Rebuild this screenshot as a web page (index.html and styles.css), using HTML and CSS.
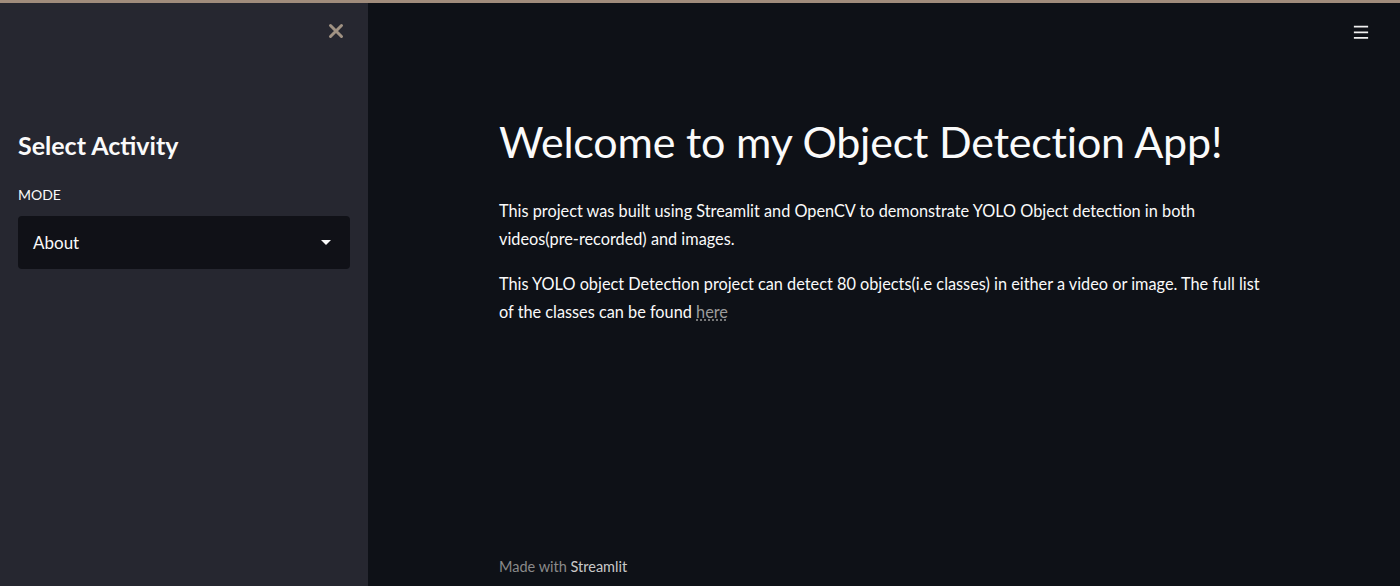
FILE: index.html
```html
<!DOCTYPE html>
<html lang="en">
<head>
<meta charset="utf-8">
<title>Object Detection App</title>
<link rel="stylesheet" href="styles.css">
</head>
<body>
<div class="app">
  <div class="decoration"></div>
  <div class="frame">
    <aside class="sidebar">
      <div class="sidebar-top">
        <button class="close-btn" aria-label="Close sidebar">
          <svg width="16" height="16" viewBox="0 0 16 16"><path d="M2.5 2.5 L13.5 13.5 M13.5 2.5 L2.5 13.5" stroke="#a09283" stroke-width="3" stroke-linecap="round"/></svg>
        </button>
      </div>
      <h2 class="sidebar-title">Select Activity</h2>
      <div class="field-label">MODE</div>
      <div class="select">
        <span class="select-value">About</span>
        <svg class="select-arrow" width="10" height="6" viewBox="0 0 10 6"><path d="M0 0 H10 L5 5 Z" fill="#fafafa"/></svg>
      </div>
    </aside>
    <main class="main">
      <div class="main-header">
        <button class="menu-btn" aria-label="Menu">
          <svg width="18" height="16" viewBox="0 0 18 16"><path d="M1 2 H17 M1 8.5 H17 M1 14.5 H17" stroke="#f0f0f0" stroke-width="2"/></svg>
        </button>
      </div>
      <div class="content">
        <h1 class="title">Welcome to my Object Detection App!</h1>
        <p class="text">This project was built using Streamlit and OpenCV to demonstrate YOLO Object detection in both videos(pre-recorded) and images.</p>
        <p class="text">This YOLO object Detection project can detect 80 objects(i.e classes) in either a video or image. The full list of the classes can be found <a class="link" href="#">here</a></p>
      </div>
      <footer class="footer">Made with <span class="footer-brand">Streamlit</span></footer>
    </main>
  </div>
</div>
</body>
</html>
```

FILE: styles.css
```css
* { box-sizing: border-box; }
html, body {
  margin: 0;
  padding: 0;
  height: 100%;
  background: #0e1117;
  overflow: hidden;
}
.app {
  display: flex;
  flex-direction: column;
  height: 586px;
  font-family: "Lato", "Open Sans", sans-serif;
  color: #fafafa;
}
.decoration {
  height: 3px;
  flex: none;
  background: #a08c7c;
}
.frame {
  flex: 1;
  display: flex;
  min-height: 0;
}
.sidebar {
  width: 368px;
  flex: none;
  background: #262730;
  display: flex;
  flex-direction: column;
  padding: 0 18px;
}
.sidebar-top {
  display: flex;
  justify-content: flex-end;
  padding-top: 20px;
  padding-right: 6px;
  height: 60px;
}
.close-btn, .menu-btn {
  background: none;
  border: 0;
  padding: 0;
  margin: 0;
  display: flex;
  align-items: center;
  justify-content: center;
  width: 16px;
  height: 16px;
}
.sidebar-title {
  margin: 66px 0 0 0;
  font-size: 25px;
  font-weight: 700;
  line-height: 32px;
  color: #fafafa;
}
.field-label {
  margin-top: 25px;
  font-size: 14px;
  line-height: 18px;
  color: #fafafa;
}
.select {
  margin-top: 12px;
  height: 53px;
  background: #101117;
  border-radius: 4px;
  display: flex;
  align-items: center;
  justify-content: space-between;
  padding: 0 19px 0 15px;
}
.select-value {
  font-size: 17px;
  color: #fafafa;
}
.main {
  flex: 1;
  display: flex;
  flex-direction: column;
  min-width: 0;
}
.main-header {
  display: flex;
  justify-content: flex-end;
  padding: 21px 31px 0 0;
  height: 103px;
}
.content {
  width: 775px;
  margin: 0 auto 0 131px;
  flex: 1;
}
.title {
  margin: 0 0 19px 0;
  font-size: 43px;
  font-weight: 400;
  line-height: 72px;
  color: #fafafa;
  letter-spacing: -0.2px;
}
.text {
  margin: 0 0 17px 0;
  font-size: 16.3px;
  line-height: 28px;
  color: #fafafa;
}
.link {
  color: #9b9b9b;
  text-decoration: underline dotted;
  text-underline-offset: 2px;
}
.footer {
  width: 775px;
  margin: 0 auto 0 131px;
  padding-bottom: 9px;
  font-size: 14.5px;
  line-height: 20px;
  color: #8a8a8a;
}
.footer-brand {
  color: #c9c9c9;
}
```
